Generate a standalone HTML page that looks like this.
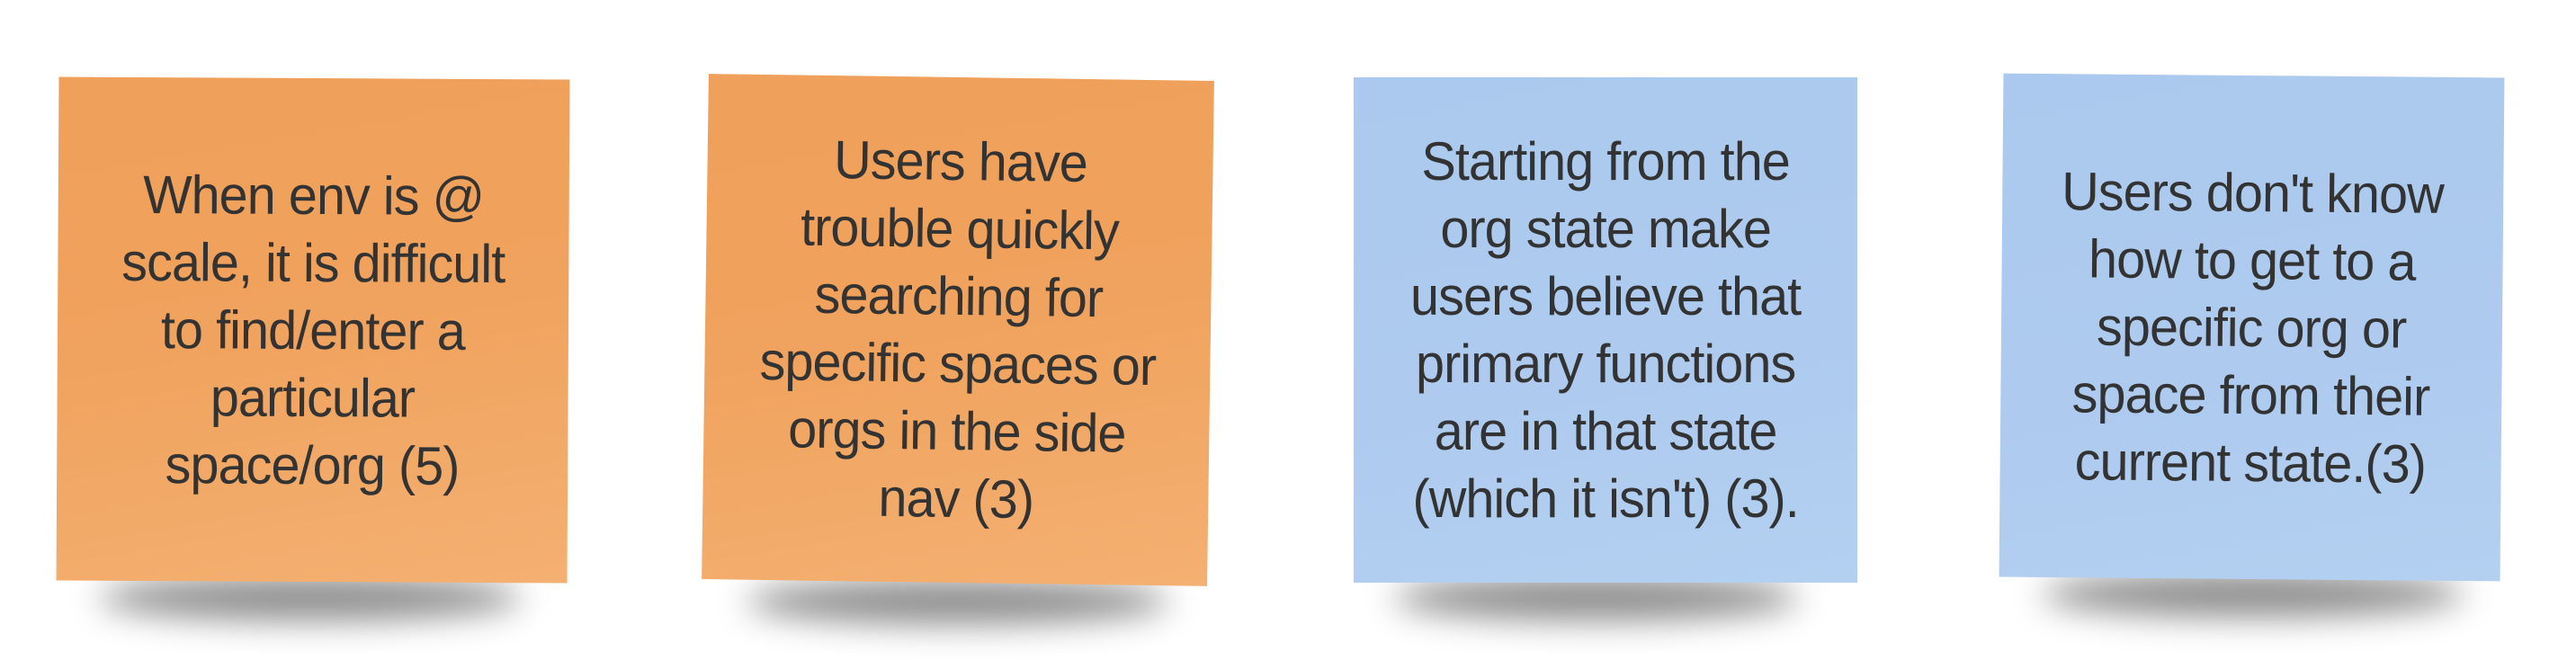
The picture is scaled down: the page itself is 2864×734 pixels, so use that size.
<!DOCTYPE html>
<html><head><style>
html,body{margin:0;padding:0;background:#fff;width:2864px;height:734px;overflow:hidden;position:relative}
.n{position:absolute;display:flex;align-items:center;justify-content:center;text-align:center;
font-family:"Liberation Sans",sans-serif;font-size:60px;line-height:75px;color:#333;box-sizing:border-box;padding:0;letter-spacing:-1px;white-space:nowrap}
.n span{display:block;transform:scaleX(0.96)}
.sh{position:absolute;height:50px;border-radius:50%;background:rgba(0,0,0,0.45);filter:blur(18px)}
.o{background:linear-gradient(170deg,#efa05a 0%,#f0a35e 50%,#f4b072 100%)}
.b{background:linear-gradient(170deg,#abc9ee 0%,#aecbef 60%,#b3d0f1 100%)}
</style></head><body>
<div class="sh" style="left:110px;top:640px;width:470px"></div>
<div class="sh" style="left:830px;top:644px;width:470px"></div>
<div class="sh" style="left:1550px;top:640px;width:450px"></div>
<div class="sh" style="left:2270px;top:636px;width:470px"></div>
<div class="n o" style="left:64px;top:87px;width:568px;height:560px;transform:rotate(0.3deg)"><span>When env is @<br>scale, it is difficult<br>to find/enter a<br>particular<br>space/org (5)</span></div>
<div class="n o" style="left:784px;top:86px;width:562px;height:562px;transform:rotate(0.8deg)"><span>Users have<br>trouble quickly<br>searching for<br>specific spaces or<br>orgs in the side<br>nav (3)</span></div>
<div class="n b" style="left:1505px;top:86px;width:560px;height:562px"><span>Starting from the<br>org state make<br>users believe that<br>primary functions<br>are in that state<br>(which it isn't) (3).</span></div>
<div class="n b" style="left:2225px;top:84px;width:557px;height:560px;transform:rotate(0.5deg)"><span>Users don't know<br>how to get to a<br>specific org or<br>space from their<br>current state.(3)</span></div>
</body></html>
